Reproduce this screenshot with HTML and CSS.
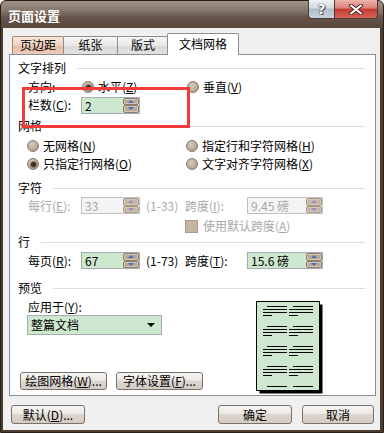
FILE: index.html
```html
<!DOCTYPE html>
<html lang="zh-CN">
<head>
    <meta charset="UTF-8">
    <title>页面设置</title>
    <link rel="stylesheet" href="styles.css">
</head>
<body>
    <div class="window">
        <div class="titlebar">
            <span class="title">页面设置</span>
            <div class="caption">
                <span class="cap help">?</span>
                <span class="cap close">
                    <svg width="16" height="11" viewBox="0 0 16 11">
                        <path d="M3 1.5 L13 9.5 M13 1.5 L3 9.5" stroke="#5a2a25" stroke-width="4" stroke-linecap="round"/>
                        <path d="M3 1.5 L13 9.5 M13 1.5 L3 9.5" stroke="#fff" stroke-width="2" stroke-linecap="round"/>
                    </svg>
                </span>
            </div>
        </div>

        <div class="client">
            <div class="tabs">
                <div class="tab hot t1">页边距</div>
                <div class="tab t2">纸张</div>
                <div class="tab t3">版式</div>
                <div class="tab active">文档网格</div>
            </div>

            <div class="panel">
                <div class="sect">文字排列</div>
                <div class="row r-dir">
                    <span class="lbl">方向:</span>
                    <span class="opt w105"><i class="radio on"></i>水平(<u>Z</u>)</span>
                    <span class="opt"><i class="radio"></i>垂直(<u>V</u>)</span>
                </div>
                <div class="row">
                    <span class="lbl">栏数(<u>C</u>):</span>
                    <div class="spin"><span class="val">2</span><span class="arrows"><b class="arr up"></b><b class="arr dn"></b></span></div>
                </div>

                <div class="sect s-grid">网格</div>
                <div class="row opts first">
                    <span class="opt w159"><i class="radio"></i>无网格(<u>N</u>)</span>
                    <span class="opt"><i class="radio"></i>指定行和字符网格(<u>H</u>)</span>
                </div>
                <div class="row opts">
                    <span class="opt w159"><i class="radio on"></i>只指定行网格(<u>O</u>)</span>
                    <span class="opt"><i class="radio"></i>文字对齐字符网格(<u>X</u>)</span>
                </div>

                <div class="sect s-char">字符</div>
                <div class="row r-spin r-each off">
                    <span class="lbl">每行(<u>E</u>):</span>
                    <div class="spin"><span class="val">33</span><span class="arrows"><b class="arr up"></b><b class="arr dn"></b></span></div>
                    <span class="range">(1-33)</span>
                    <span class="lbl2">跨度(<u>I</u>):</span>
                    <div class="spin wide"><span class="val">9.45 磅</span><span class="arrows"><b class="arr up"></b><b class="arr dn"></b></span></div>
                </div>
                <div class="row r-check off">
                    <i class="check"></i>使用默认跨度(<u>A</u>)
                </div>

                <div class="sect s-line">行</div>
                <div class="row r-spin r-page">
                    <span class="lbl">每页(<u>R</u>):</span>
                    <div class="spin"><span class="val">67</span><span class="arrows"><b class="arr up"></b><b class="arr dn"></b></span></div>
                    <span class="range">(1-73)</span>
                    <span class="lbl2">跨度(<u>T</u>):</span>
                    <div class="spin wide"><span class="val">15.6 磅</span><span class="arrows"><b class="arr up"></b><b class="arr dn"></b></span></div>
                </div>

                <div class="sect s-prev">预览</div>
                <div class="preview">
                    <div class="prev-left">
                        <div class="apply">应用于(<u>Y</u>):</div>
                        <div class="combo"><span>整篇文档</span><i class="drop"></i></div>
                        <div class="prev-btns">
                            <button class="btn w87">绘图网格(<u>W</u>)...</button>
                            <button class="btn w87">字体设置(<u>F</u>)...</button>
                        </div>
                    </div>
                    <svg class="page" width="67" height="93" viewBox="0 0 67 93">
                        <rect x="3.5" y="3.5" width="63" height="89" fill="#000"/>
                        <rect x="0.5" y="0.5" width="63" height="89" fill="#cde8cf" stroke="#000"/>
                        <g stroke="#000" stroke-width="1">
                            <path d="M11 5.5h20M37 5.5h20M7 8.5h24M33 8.5h24M7 11.5h24M33 11.5h24M7 14.5h9M33 14.5h9"/>
                            <path d="M11 25.5h20M37 25.5h20M7 28.5h24M33 28.5h24M7 31.5h24M33 31.5h24M7 34.5h9M33 34.5h9"/>
                            <path d="M11 45.5h20M37 45.5h20M7 48.5h24M33 48.5h24M7 51.5h24M33 51.5h24M7 54.5h9M33 54.5h9"/>
                            <path d="M11 65.5h20M37 65.5h20M7 68.5h24M33 68.5h24M7 71.5h24M33 71.5h24M7 74.5h9M33 74.5h9"/>
                            <path d="M11 85.5h20M37 85.5h20"/>
                        </g>
                    </svg>
                </div>

                <div class="mark"></div>
            </div>

            <div class="footer">
                <button class="btn w74">默认(<u>D</u>)...</button>
                <button class="btn w74 ok">确定</button>
                <button class="btn w72">取消</button>
            </div>
        </div>
    </div>
</body>
</html>
```

FILE: styles.css
```css
* {
    box-sizing: border-box;
}
body {
    margin: 0;
    font-family: "Noto Sans CJK SC", "Noto Sans", sans-serif;
    font-size: 12px;
    line-height: 14px;
    color: #000;
    background: #fff;
}
u {
    text-decoration: underline;
}
.window {
    width: 384px;
    height: 433px;
    background: #4b3c31;
    border: 1px solid #2a201a;
    border-radius: 6px 6px 0 0;
    display: flex;
    flex-direction: column;
}
.titlebar {
    height: 27px;
    display: flex;
    border-radius: 5px 5px 0 0;
    background: linear-gradient(#a19387, #85766a 35%, #66554a 60%, #574739);
}
.title {
    color: #fff;
    font-weight: bold;
    font-size: 13px;
    padding: 8px 0 0 7px;
}
.caption {
    margin-left: auto;
    margin-right: 5px;
    display: flex;
    align-self: flex-start;
    margin-top: -1px;
}
.cap {
    height: 19px;
    border: 1px solid #4a3c33;
    border-top: none;
    display: flex;
    align-items: center;
    justify-content: center;
}
.help {
    width: 26px;
    border-right: none;
    border-radius: 0 0 0 4px;
    background: linear-gradient(#eef1f5, #d3d9e0 45%, #b3bdc9 50%, #c8d1dc);
    color: #fff;
    font-weight: bold;
    font-size: 14px;
    font-family: "DejaVu Sans", sans-serif;
    text-shadow: 0 0 1px #333, 0 0 1px #333, 1px 1px 0 #555;
}
.close {
    width: 44px;
    border-radius: 0 0 4px 0;
    background: linear-gradient(#eeb4ae, #d97f77 45%, #c33a30 52%, #d9665c);
}

.client {
    flex: 1;
    margin: 0 3px 2px 2px;
    background: #f0f0f0;
    padding: 5px 4px 0 6px;
    display: flex;
    flex-direction: column;
}
.tabs {
    display: flex;
    align-items: flex-end;
    height: 21px;
    padding-left: 3px;
}
.tab {
    height: 18px;
    border: 1px solid #8d8f95;
    border-bottom: none;
    border-radius: 2px 2px 0 0;
    text-align: center;
    line-height: 16px;
    background: linear-gradient(#f6f6f6, #e9e9e9 50%, #d9d9d9 51%, #e1e1e1);
}
.t1 {
    width: 52px;
}
.t2 {
    width: 55px;
    margin-left: -1px;
}
.t3 {
    width: 52px;
    margin-left: -1px;
}
.tab.hot {
    border-color: #a88a72;
    background: linear-gradient(#f8e6dc, #f0d2c1 50%, #e6bba4 51%, #eecbb8);
}
.tab.active {
    position: relative;
    z-index: 2;
    width: 72px;
    height: 22px;
    margin-left: -2px;
    margin-bottom: -1px;
    background: #fff;
    line-height: 20px;
}

.panel {
    position: relative;
    height: 342px;
    border: 1px solid #898c95;
    background: #fff;
    padding-top: 6px;
}
.sect {
    display: flex;
    align-items: center;
    height: 14px;
    padding: 0 10px 0 8px;
}
.sect::after {
    content: "";
    flex: 1;
    height: 1px;
    background: #d5dfe5;
    margin-left: 11px;
}
.s-grid { margin-top: 5px; }
.s-char { margin-top: 8px; }
.s-line { margin-top: 1px; }
.s-prev { margin-top: 12px; }

.row {
    display: flex;
    align-items: center;
    height: 18px;
    padding-left: 18px;
    white-space: nowrap;
}
.r-dir { margin-top: 3px; }
.lbl { width: 53px; }
.r-dir .lbl { width: 54px; }
.opt {
    display: flex;
    align-items: center;
}
.w105 { width: 105px; }
.w159 { width: 159px; }
.row.opts { padding-left: 17px; }
.row.opts.first { margin-top: 4px; }

.radio {
    width: 12px;
    height: 12px;
    margin-right: 4px;
    border-radius: 50%;
    border: 1px solid #8a7b6b;
    background: radial-gradient(circle at 40% 35%, #d8ccbd, #b3a391 70%, #a29179);
    display: flex;
    align-items: center;
    justify-content: center;
}
.radio.on::before {
    content: "";
    width: 5px;
    height: 5px;
    border-radius: 50%;
    background: #3e3025;
    box-shadow: 0 0 0 1px #8c7c6a;
}

.spin {
    display: flex;
    width: 59px;
    height: 17px;
    border: 1px solid #a4abb3;
    background: #cde8cf;
}
.spin.wide { width: 76px; }
.spin .val {
    flex: 1;
    padding-left: 3px;
    line-height: 15px;
}
.arrows {
    width: 16px;
    display: flex;
    flex-direction: column;
}
.arr {
    flex: 1;
    display: flex;
    align-items: center;
    justify-content: center;
    background: #b9a791;
    border: 1px solid #8f7e6b;
    border-radius: 2px;
    box-shadow: inset 0 0 0 1px #d3c6b5;
}
.arr.up::before {
    content: "";
    border-left: 3px solid transparent;
    border-right: 3px solid transparent;
    border-bottom: 3px solid #4a6cc7;
}
.arr.dn::before {
    content: "";
    border-left: 3px solid transparent;
    border-right: 3px solid transparent;
    border-top: 3px solid #4a6cc7;
}

.r-spin { height: 17px; }
.r-each { margin-top: 2px; }
.r-page { margin-top: 3px; }
.range {
    width: 39px;
    margin-left: 6px;
}
.lbl2 { width: 62px; }

.off { color: #a8a8a8; }
.off .spin {
    background: #f4f4f4;
    border-color: #c2c2c2;
}
.off .arr {
    background: #c7b8a6;
    border-color: #a89886;
}
.off .arr.up::before { border-bottom-color: #9a8fc4; }
.off .arr.dn::before { border-top-color: #9a8fc4; }

.r-check {
    height: 16px;
    margin-top: 4px;
    padding-left: 175px;
}
.check {
    width: 13px;
    height: 13px;
    margin-right: 5px;
    border: 1px solid #a99a89;
    background: #c4b5a3;
}

.preview {
    display: flex;
}
.prev-left {
    width: 246px;
}
.apply {
    height: 14px;
    margin-top: 5px;
    padding-left: 18px;
}
.combo {
    display: flex;
    align-items: center;
    justify-content: space-between;
    width: 135px;
    height: 20px;
    margin: 1px 0 0 17px;
    padding: 0 6px 0 3px;
    border: 1px solid #a4abb3;
    background: #cde8cf;
}
.drop {
    border-left: 4px solid transparent;
    border-right: 4px solid transparent;
    border-top: 4px solid #000;
}
.prev-btns {
    display: flex;
    gap: 9px;
    margin-top: 37px;
    padding-left: 10px;
}
.page {
    display: block;
    margin-top: 6px;
}

.btn {
    height: 18px;
    padding: 0;
    font: inherit;
    color: #000;
    border: 1px solid #7d726a;
    border-radius: 3px;
    background: linear-gradient(#f7f5f3, #ece8e4 45%, #ddd6cf 50%, #d3ccc4);
    white-space: nowrap;
}
.w87 { width: 87px; }
.w74 { width: 74px; }
.w72 { width: 72px; }

.footer {
    display: flex;
    gap: 10px;
    margin-top: 9px;
    padding: 0 2px;
}
.footer .btn { height: 19px; }
.footer .ok { margin-left: auto; }

.mark {
    position: absolute;
    left: 12px;
    top: 32px;
    width: 168px;
    height: 41px;
    border: 3px solid #f23b3b;
}
```
